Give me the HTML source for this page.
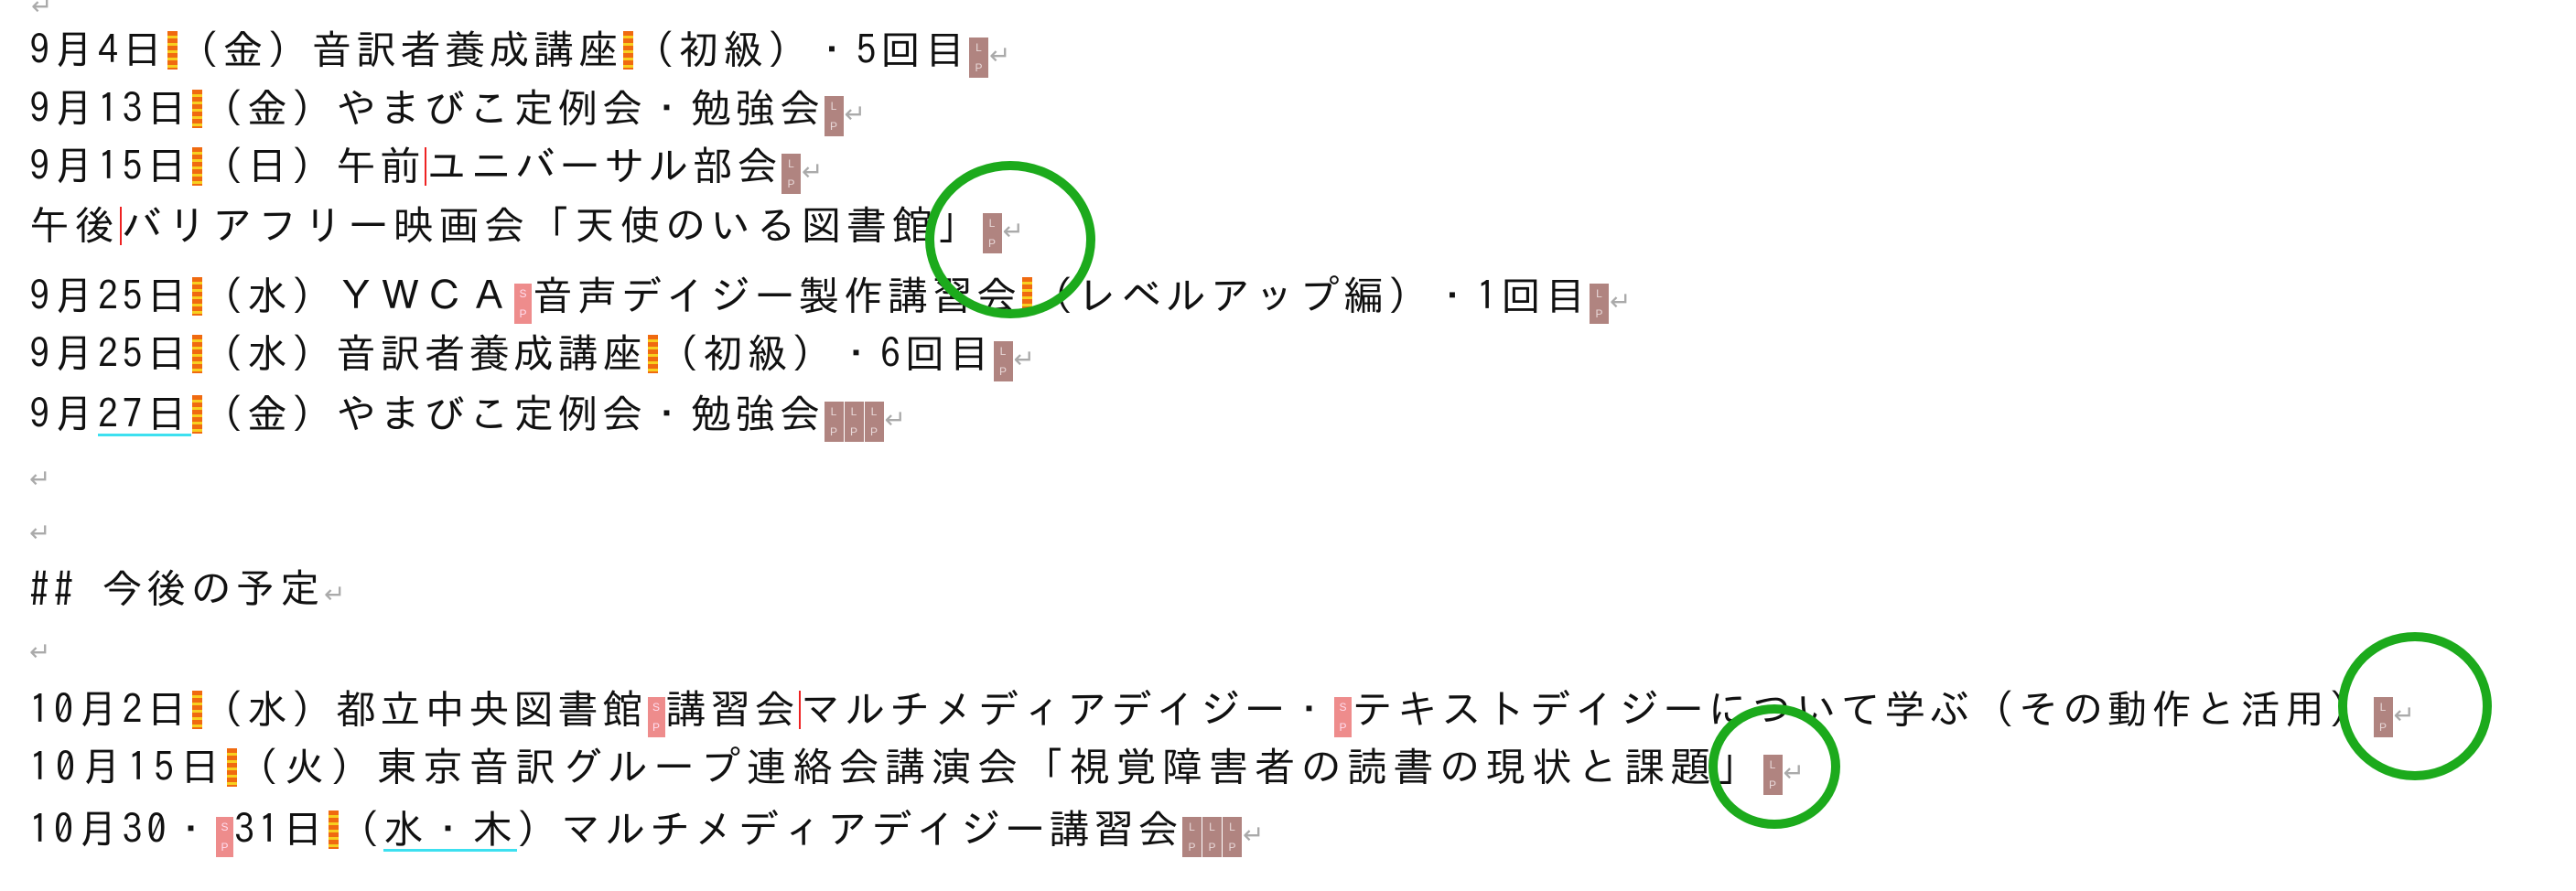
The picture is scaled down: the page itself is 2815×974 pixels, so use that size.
<!DOCTYPE html>
<html><head><meta charset="utf-8"><style>
body{margin:0;width:2815px;height:974px;background:#fff;position:relative;overflow:hidden;font-family:"IPAGothic","Noto Sans CJK JP",sans-serif;color:#111}
.l{position:absolute;left:32px;font-size:44px;line-height:50px;white-space:nowrap;letter-spacing:4.5px}
.o{display:inline-block;width:11px;height:42px;vertical-align:-6px;margin:0 1px;background-image:repeating-linear-gradient(180deg,#f06a10 0 5px,#f7d020 5px 8px)}
.lp{display:inline-block;width:21px;height:44px;background:#b08480;vertical-align:-8px;margin-right:1px;color:#e8d8d8;font-size:12px;line-height:22px;text-align:center;font-family:"Liberation Sans",sans-serif;letter-spacing:0}
.sp{display:inline-block;width:19px;height:44px;background:#ee8c8c;vertical-align:-8px;margin:0 1px;color:#fde;font-size:12px;line-height:22px;text-align:center;font-family:"Liberation Sans",sans-serif;letter-spacing:0}
.r{color:#aaa;font-size:28px;font-family:"DejaVu Sans",sans-serif;letter-spacing:0}
.c{display:inline-block;width:2px;height:42px;background:#e22;vertical-align:-6px}
.u{border-bottom:3px solid #3de0f0}
.e{position:absolute;border:10px solid #1caa1c;border-radius:50%;box-sizing:border-box}
</style></head><body>
<div class="l r" style="top:-18px;left:34px">↵</div>
<div class="l" style="top:29px">9月4日<span class="o"></span>（金）音訳者養成講座<span class="o"></span>（初級）・5回目<span class="lp">L<br>P</span><span class="r">↵</span></div>
<div class="l" style="top:93px">9月13日<span class="o"></span>（金）やまびこ定例会・勉強会<span class="lp">L<br>P</span><span class="r">↵</span></div>
<div class="l" style="top:156px">9月15日<span class="o"></span>（日）午前<span class="c"></span>ユニバーサル部会<span class="lp">L<br>P</span><span class="r">↵</span></div>
<div class="l" style="top:221px;letter-spacing:5.5px">午後<span class="c"></span>バリアフリー映画会「天使のいる図書館」<span class="lp">L<br>P</span><span class="r">↵</span></div>
<div class="l" style="top:298px">9月25日<span class="o"></span>（水）ＹＷＣＡ<span class="sp">S<br>P</span>音声デイジー製作講習会<span class="o"></span>（レベルアップ編）・1回目<span class="lp">L<br>P</span><span class="r">↵</span></div>
<div class="l" style="top:361px">9月25日<span class="o"></span>（水）音訳者養成講座<span class="o"></span>（初級）・6回目<span class="lp">L<br>P</span><span class="r">↵</span></div>
<div class="l" style="top:427px">9月<span class="u">27日</span><span class="o"></span>（金）やまびこ定例会・勉強会<span class="lp">L<br>P</span><span class="lp">L<br>P</span><span class="lp">L<br>P</span><span class="r">↵</span></div>
<div class="l r" style="top:499px">↵</div>
<div class="l r" style="top:558px">↵</div>
<div class="l" style="top:618px">##&nbsp;今後の予定<span class="r">↵</span></div>
<div class="l r" style="top:688px">↵</div>
<div class="l" style="top:750px">10月2日<span class="o"></span>（水）都立中央図書館<span class="sp">S<br>P</span>講習会<span class="c"></span>マルチメディアデイジー・<span class="sp">S<br>P</span>テキストデイジーについて学ぶ（その動作と活用）<span class="lp">L<br>P</span><span class="r">↵</span></div>
<div class="l" style="top:813px;letter-spacing:6.5px">10月15日<span class="o"></span>（火）東京音訳グループ連絡会講演会「視覚障害者の読書の現状と課題」<span class="lp">L<br>P</span><span class="r">↵</span></div>
<div class="l" style="top:881px">10月30・<span class="sp">S<br>P</span>31日<span class="o"></span>（<span class="u">水・木</span>）マルチメディアデイジー講習会<span class="lp">L<br>P</span><span class="lp">L<br>P</span><span class="lp">L<br>P</span><span class="r">↵</span></div>
<div class="e" style="left:1011px;top:176px;width:186px;height:172px"></div>
<div class="e" style="left:2555px;top:691px;width:168px;height:162px"></div>
<div class="e" style="left:1867px;top:770px;width:144px;height:136px"></div>
</body></html>
